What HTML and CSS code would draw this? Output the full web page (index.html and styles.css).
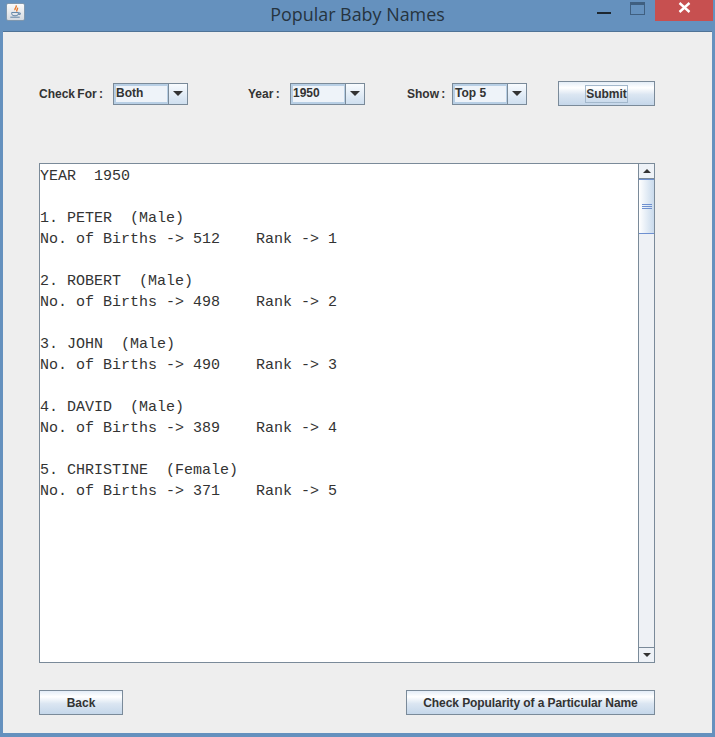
FILE: index.html
```html
<!DOCTYPE html>
<html lang="en">

<head>
    <meta charset="UTF-8">
    <title>Popular Baby Names</title>
    <link rel="stylesheet" href="styles.css">
</head>

<body>
    <div class="window">
        <div class="titlebar">
            <div class="app-icon">
                <svg width="18" height="18" viewBox="0 0 18 18">
                    <path d="M9.5 2 C11 4 7.5 5 8.5 7 M11 4.500 C12 6 9.500 6.500 10.500 8.500" fill="none" stroke="#e8792b" stroke-width="1.500"/>
                    <path d="M5 9.500 H12 V11 C12 12.500 10 13 8.500 13 C7 13 5 12.500 5 11 Z" fill="none" stroke="#5a7fa3"/>
                    <path d="M12 10 H14 V11.500 H12 M3.500 14.500 H13.500" fill="none" stroke="#5a7fa3"/>
                </svg>
            </div>
            <div class="title">Popular Baby Names</div>
            <div class="window-controls">
                <div class="min-btn"></div>
                <div class="max-btn"></div>
                <div class="close-btn">
                    <svg width="13" height="11" viewBox="0 0 13 11">
                        <path d="M1.500 1 L11.500 10 M11.500 1 L1.500 10" stroke="#fff" stroke-width="2.400"/>
                    </svg>
                </div>
            </div>
        </div>

        <div class="content">
            <div class="controls">
                <span class="label label-check">Check For :</span>
                <div class="combo combo-check">
                    <span class="combo-value">Both</span>
                    <span class="combo-arrow"></span>
                </div>
                <span class="label label-year">Year :</span>
                <div class="combo combo-year">
                    <span class="combo-value">1950</span>
                    <span class="combo-arrow"></span>
                </div>
                <span class="label label-show">Show :</span>
                <div class="combo combo-show">
                    <span class="combo-value">Top 5</span>
                    <span class="combo-arrow"></span>
                </div>
                <button class="btn btn-submit"><span class="focus-box">Submit</span></button>
            </div>

            <div class="results">
                <pre class="results-text">YEAR  1950

1. PETER  (Male)
No. of Births -> 512    Rank -> 1

2. ROBERT  (Male)
No. of Births -> 498    Rank -> 2

3. JOHN  (Male)
No. of Births -> 490    Rank -> 3

4. DAVID  (Male)
No. of Births -> 389    Rank -> 4

5. CHRISTINE  (Female)
No. of Births -> 371    Rank -> 5</pre>
                <div class="scrollbar">
                    <div class="scroll-btn"><span class="arrow-up"></span></div>
                    <div class="scroll-track">
                        <div class="scroll-thumb">
                            <span class="grip"></span>
                        </div>
                    </div>
                    <div class="scroll-btn scroll-btn-down"><span class="arrow-down"></span></div>
                </div>
            </div>

            <div class="footer">
                <button class="btn btn-back">Back</button>
                <button class="btn btn-check">Check Popularity of a Particular Name</button>
            </div>
        </div>
    </div>
</body>

</html>
```

FILE: styles.css
```css
* {
    box-sizing: border-box;
}

html,
body {
    margin: 0;
    height: 100%;
    overflow: hidden;
}

.window {
    width: 715px;
    height: 737px;
    background-color: rgb(101, 145, 190);
    padding: 0 3px 4px 3px;
    display: flex;
    flex-direction: column;
}

.titlebar {
    height: 31px;
    margin: 0 -3px;
    flex-shrink: 0;
    display: grid;
    grid-template-columns: 1fr auto 1fr;
    align-items: start;
}

.app-icon {
    width: 19px;
    height: 18px;
    margin: 3px 0 0 6px;
    background: linear-gradient(#fafafa, #d5dbe2);
    border: 1px solid #7f97ae;
    border-radius: 2px;
    display: flex;
    align-items: center;
    justify-content: center;
}

.title {
    font-family: "Open Sans", sans-serif;
    font-size: 17.9px;
    line-height: 24px;
    margin-top: 2px;
    color: #26343f;
}

.window-controls {
    display: flex;
    justify-content: flex-end;
    align-items: flex-start;
    padding-right: 2px;
}

.min-btn {
    width: 14px;
    height: 2px;
    margin-top: 12px;
    background-color: #1d2730;
}

.max-btn {
    width: 15px;
    height: 13px;
    margin: 2px 10px 0 19px;
    border: 1px solid #3f5f80;
    border-top-width: 3px;
}

.close-btn {
    width: 58px;
    height: 21px;
    background-color: rgb(199, 80, 80);
    display: flex;
    align-items: center;
    justify-content: center;
    padding-bottom: 7px;
}

.content {
    flex: 1;
    background-color: rgb(238, 238, 238);
    border-top: 1px solid #4f7396;
    padding: 49px 57px 0 36px;
    font-family: "Liberation Sans", sans-serif;
}

.controls {
    display: flex;
    align-items: center;
    height: 25px;
}

.label {
    font-size: 12px;
    font-weight: bold;
    word-spacing: -1px;
    color: #333;
    white-space: nowrap;
}

.label-check {
    width: 64px;
}

.label-year {
    width: 32px;
    margin-left: 60px;
}

.label-show {
    width: 38px;
    margin-left: 42px;
}

.combo {
    width: 75px;
    height: 22px;
    display: flex;
    flex-shrink: 0;
    border: 1px solid #7a8a99;
    background-color: #fff;
}

.combo-check,
.combo-year {
    margin-left: 10px;
}

.combo-show {
    margin-left: 7px;
}

.combo-value {
    flex: 1;
    border: 2px solid #b8cfe5;
    border-right-width: 1px;
    background-color: #eef3f9;
    font-size: 12px;
    font-weight: bold;
    line-height: 15px;
    color: #333;
}

.combo-arrow {
    width: 19px;
    border-left: 1px solid #7a8a99;
    background: linear-gradient(#f8fbfe, #cfdfef);
    display: flex;
    align-items: center;
    justify-content: center;
}

.combo-arrow::after {
    content: "";
    border-left: 5px solid transparent;
    border-right: 5px solid transparent;
    border-top: 5px solid #333;
}

.btn {
    border: 1px solid #7a8a99;
    background: linear-gradient(#e4edf7, #ffffff 25%, #dbe6f2 55%, #c5d7ea);
    font-family: "Liberation Sans", sans-serif;
    font-size: 12px;
    font-weight: bold;
    color: #333;
    padding: 0;
    height: 25px;
}

.btn-submit {
    width: 97px;
    margin-left: 31px;
    flex-shrink: 0;
}

.focus-box {
    border: 1px solid #a3b8cc;
    padding: 1px 0;
    display: inline-block;
    line-height: 14px;
}

.results {
    display: flex;
    width: 616px;
    height: 500px;
    margin-top: 57px;
    border: 1px solid #7a8a99;
    background-color: #fff;
}

.results-text {
    flex: 1;
    margin: 0;
    padding: 2px 0 0 0;
    font-family: "Liberation Mono", monospace;
    font-size: 15px;
    line-height: 21px;
    color: #333;
}

.scrollbar {
    width: 16px;
    display: flex;
    flex-direction: column;
    background-color: #eef1f5;
    border-left: 1px solid #7a8a99;
}

.scroll-btn {
    height: 15px;
    display: flex;
    align-items: center;
    justify-content: center;
    background-color: #eef2f7;
    border-bottom: 1px solid #7a8a99;
}

.scroll-btn-down {
    border-bottom: none;
    border-top: 1px solid #7a8a99;
}

.arrow-up {
    border-left: 4px solid transparent;
    border-right: 4px solid transparent;
    border-bottom: 4px solid #333;
}

.arrow-down {
    border-left: 4px solid transparent;
    border-right: 4px solid transparent;
    border-top: 4px solid #333;
}

.scroll-track {
    flex: 1;
}

.scroll-thumb {
    height: 55px;
    background: linear-gradient(90deg, #ffffff, #c9daec);
    border: 1px solid #6e90d0;
    border-width: 1px 0;
    display: flex;
    align-items: center;
    justify-content: center;
}

.grip {
    width: 10px;
    height: 5px;
    border-top: 1px solid #6e90d0;
    border-bottom: 1px solid #6e90d0;
    background: linear-gradient(#6e90d0, #6e90d0) center / 100% 1px no-repeat;
}

.footer {
    display: flex;
    justify-content: space-between;
    width: 616px;
    margin-top: 27px;
}

.btn-back {
    width: 84px;
}

.btn-check {
    width: 249px;
    letter-spacing: -0.08px;
}
```
